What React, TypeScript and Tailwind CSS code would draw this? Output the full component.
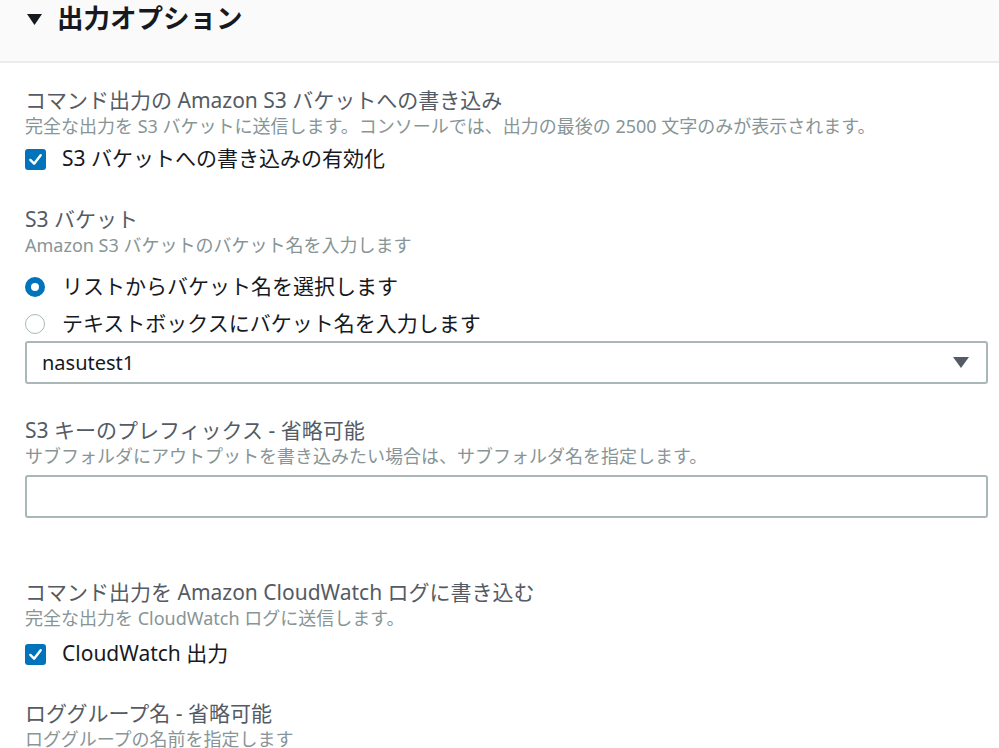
import React from "react";

const FONT = { fontFamily: '"Noto Sans", "Noto Sans CJK JP", sans-serif' };

function Checkbox() {
  return (
    <span className="flex h-[21px] w-[21px] items-center justify-center rounded-[3px] bg-[#0073bb]">
      <svg width="15" height="15" viewBox="0 0 16 16">
        <path d="M2.5 8.5 L6.5 12.5 L13.5 3.5" fill="none" stroke="#fff" strokeWidth="2.6" strokeLinecap="round" strokeLinejoin="round" />
      </svg>
    </span>
  );
}

function Label({ children, className = "" }: { children: React.ReactNode; className?: string }) {
  return <div className={`text-[21px] leading-[26px] text-[#545b64] ${className}`}>{children}</div>;
}

function Desc({ children }: { children: React.ReactNode }) {
  return <div className="text-[18px] leading-[26px] text-[#879596]">{children}</div>;
}

export default function App() {
  return (
    <div className="h-[748px] w-[999px] overflow-hidden bg-white" style={FONT}>
      <div className="h-[63px] border-b-2 border-[#eaeded] bg-[#fafafa]">
        <div className="flex h-[36px] items-center pl-[27px]">
          <svg width="15" height="11" viewBox="0 0 15 11" className="mt-[3px]">
            <path d="M0 0 H15 L7.5 11 Z" fill="#16191f" />
          </svg>
          <span className="ml-[15px] text-[26.5px] font-bold leading-[36px] text-[#16191f]">出力オプション</span>
        </div>
      </div>

      <div className="pl-[25px] pr-[11px]">
        <Label className="mt-[24px]">コマンド出力の Amazon S3 バケットへの書き込み</Label>
        <Desc>完全な出力を S3 バケットに送信します。コンソールでは、出力の最後の 2500 文字のみが表示されます。</Desc>
        <div className="mt-[8px] flex h-[24px] items-center">
          <Checkbox />
          <span className="ml-[16px] text-[21px] text-[#16191f]">S3 バケットへの書き込みの有効化</span>
        </div>

        <Label className="mt-[35px]">S3 バケット</Label>
        <Desc>Amazon S3 バケットのバケット名を入力します</Desc>
        <div className="mt-[17px] flex h-[24px] items-center">
          <span className="flex h-[20px] w-[20px] items-center justify-center rounded-full bg-[#0073bb]">
            <span className="h-[8px] w-[8px] rounded-full bg-white" />
          </span>
          <span className="ml-[17px] text-[21px] text-[#16191f]">リストからバケット名を選択します</span>
        </div>
        <div className="mt-[13px] flex h-[24px] items-center">
          <span className="h-[20px] w-[20px] rounded-full border-[1.5px] border-[#aab7b8] bg-white" />
          <span className="ml-[17px] text-[21px] text-[#16191f]">テキストボックスにバケット名を入力します</span>
        </div>
        <div className="mt-[5px] flex h-[43px] items-center justify-between rounded-[3px] border-2 border-[#aab7b8] pl-[15px] pr-[17px]">
          <span className="text-[20px] text-[#16191f]">nasutest1</span>
          <svg width="16" height="11" viewBox="0 0 16 11">
            <path d="M0 0 H16 L8 11 Z" fill="#545b64" />
          </svg>
        </div>

        <Label className="mt-[33px]">S3 キーのプレフィックス - 省略可能</Label>
        <Desc>サブフォルダにアウトプットを書き込みたい場合は、サブフォルダ名を指定します。</Desc>
        <div className="mt-[6px] h-[43px] rounded-[3px] border-2 border-[#aab7b8]" />

        <Label className="mt-[61px]">コマンド出力を Amazon CloudWatch ログに書き込む</Label>
        <Desc>完全な出力を CloudWatch ログに送信します。</Desc>
        <div className="mt-[11px] flex h-[24px] items-center">
          <Checkbox />
          <span className="ml-[16px] text-[21px] text-[#16191f]">CloudWatch 出力</span>
        </div>

        <Label className="mt-[34px]">ロググループ名 - 省略可能</Label>
        <Desc>ロググループの名前を指定します</Desc>
      </div>
    </div>
  );
}
